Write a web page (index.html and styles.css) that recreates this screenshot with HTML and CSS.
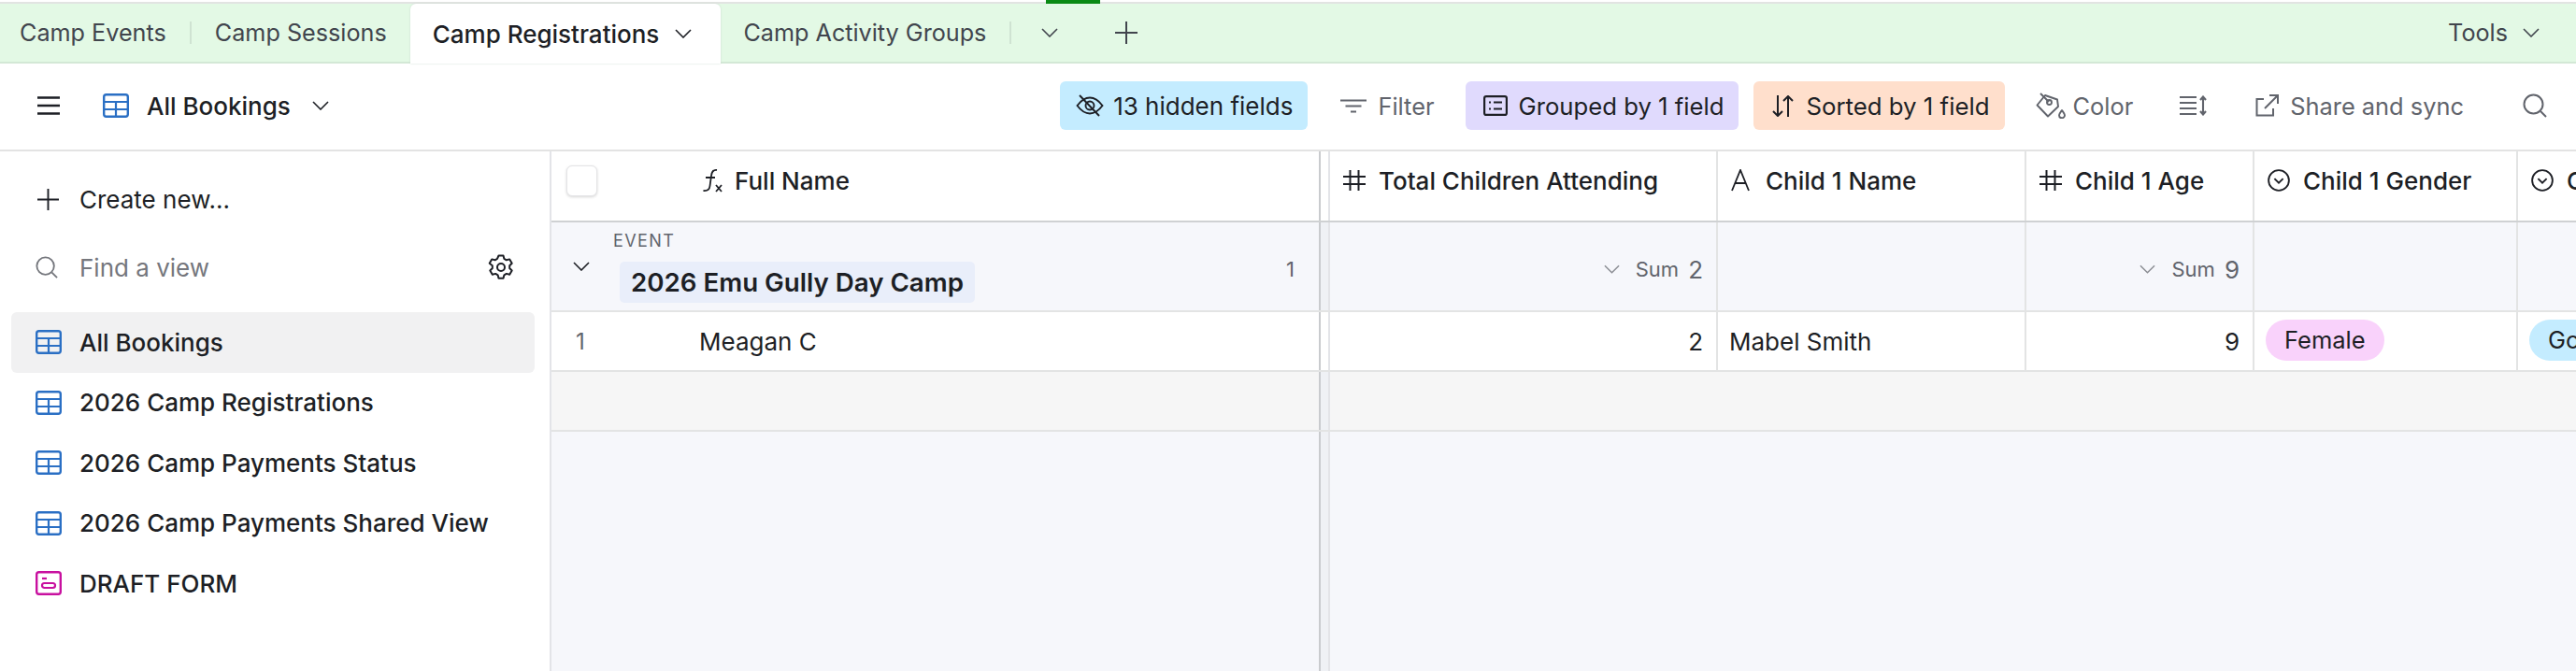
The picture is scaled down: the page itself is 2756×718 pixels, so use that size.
FILE: index.html
```html
<!DOCTYPE html>
<html lang="en">
<head>
    <meta charset="UTF-8">
    <title>Camp Registrations</title>
    <link rel="stylesheet" href="styles.css">
</head>
<body>

<svg class="defs">
    <symbol id="chev" viewBox="0 0 18 10"><path d="M1 1l8 8 8-8" fill="none" stroke="currentColor" stroke-width="1.6"/></symbol>
    <symbol id="table" viewBox="0 0 28 26"><rect x="1.2" y="1.2" width="25.6" height="23.6" rx="2.5" fill="none" stroke="currentColor" stroke-width="2.4"/><path d="M1 9h26M1 17h26M14 9v16" fill="none" stroke="currentColor" stroke-width="2.2"/></symbol>
    <symbol id="hash" viewBox="0 0 24 24"><path d="M7.5 1v22M16.5 1v22M0 8h24M0 16h24" fill="none" stroke="currentColor" stroke-width="2"/></symbol>
    <symbol id="circ" viewBox="0 0 26 26"><circle cx="13" cy="13" r="11.8" fill="none" stroke="currentColor" stroke-width="2"/><path d="M8 11l5 5 5-5" fill="none" stroke="currentColor" stroke-width="2"/></symbol>
    <symbol id="mag" viewBox="0 0 26 26"><circle cx="11.5" cy="11.5" r="10" fill="none" stroke="currentColor" stroke-width="2"/><path d="M19 19l6 6" fill="none" stroke="currentColor" stroke-width="2"/></symbol>
    <symbol id="plus" viewBox="0 0 24 24"><path d="M12 0v24M0 12h24" fill="none" stroke="currentColor" stroke-width="2"/></symbol>
</svg>

<div class="topline"><div class="accent"></div></div>

<div class="tabbar">
    <div class="tab">Camp Events</div>
    <div class="tabsep"></div>
    <div class="tab tab-2">Camp Sessions</div>
    <div class="tab-active">Camp Registrations <svg class="chev"><use href="#chev"/></svg></div>
    <div class="tab tab-4">Camp Activity Groups</div>
    <div class="tabsep"></div>
    <svg class="chev tab-more"><use href="#chev"/></svg>
    <svg class="tab-plus"><use href="#plus"/></svg>
    <div class="spacer"></div>
    <div class="tools">Tools <svg class="chev"><use href="#chev"/></svg></div>
</div>

<div class="toolbar">
    <svg class="burger" viewBox="0 0 24 20"><path d="M0 1.5h24M0 10h24M0 18.5h24" fill="none" stroke="currentColor" stroke-width="2.4"/></svg>
    <svg class="viewicon"><use href="#table"/></svg>
    <div class="viewname">All Bookings</div>
    <svg class="chev"><use href="#chev"/></svg>
    <div class="spacer"></div>

    <div class="pill pill-blue">
        <svg class="ticon" viewBox="0 0 30 24"><g fill="none" stroke="currentColor" stroke-width="1.900"><path d="M1.500 12C6 6 10 3.500 15 3.500S24 6 28.500 12C24 18 20 20.500 15 20.500S6 18 1.500 12z"/><circle cx="15" cy="12" r="4.500"/><path d="M4 1l21 22"/></g></svg>
        13 hidden fields
    </div>
    <div class="tool tool-filter">
        <svg class="ticon-filter" viewBox="0 0 28 15"><path d="M0 1.500h28M5.500 7.500h17M11 13.500h6" fill="none" stroke="currentColor" stroke-width="2.200"/></svg>
        Filter
    </div>
    <div class="pill pill-purple">
        <svg class="ticon-group" viewBox="0 0 26 22"><g fill="none" stroke="currentColor" stroke-width="2.200"><rect x="1.100" y="1.100" width="23.800" height="19.800" rx="2"/><path d="M11 7.500h9M11 14.500h9M6 7.500h2M6 14.500h2"/></g></svg>
        Grouped by 1 field
    </div>
    <div class="pill pill-peach">
        <svg class="ticon-sort" viewBox="0 0 23 23"><path d="M6 0v22M1 17l5 5 5-5M17 23V1M12 6l5-5 5 5" fill="none" stroke="currentColor" stroke-width="2"/></svg>
        Sorted by 1 field
    </div>
    <div class="tool tool-color">
        <svg class="ticon-color" viewBox="0 0 32 28"><g fill="none" stroke="currentColor" stroke-width="1.900" stroke-linejoin="round"><path d="M10 3L1.500 13.500 13 25.500l11-10.500-1-7.500z"/><circle cx="14.500" cy="10.500" r="2.500"/><path d="M5 1l9 9"/><path d="M28 19c1.800 2.500 3 3.700 3 5.300a3 3 0 0 1-6 0c0-1.600 1.200-2.800 3-5.300z"/></g></svg>
        Color
    </div>
    <svg class="ticon-rows" viewBox="0 0 29 22"><path d="M0 2h18M0 8h18M0 14h18M0 20h18M25 2v18M22 5l3-3.500L28 5M22 17l3 3.500 3-3.500" fill="none" stroke="currentColor" stroke-width="2.100"/></svg>
    <div class="tool tool-share">
        <svg class="ticon-share" viewBox="0 0 25 24"><path d="M9 5H1.500v17.500H19V15M10 15L23.500 1.500M15 1h9v9" fill="none" stroke="currentColor" stroke-width="2"/></svg>
        Share and sync
    </div>
    <svg class="tool-search"><use href="#mag"/></svg>
</div>

<div class="main">
    <div class="sidebar">
        <div class="side-create">
            <svg class="side-plus"><use href="#plus"/></svg>
            Create new...
        </div>
        <div class="side-find">
            <svg class="side-mag"><use href="#mag"/></svg>
            <span class="find-text">Find a view</span>
            <svg class="gear" viewBox="0 0 28 28"><g fill="none" stroke="currentColor" stroke-width="2"><circle cx="14" cy="14" r="4"/><path d="M11.500 1.500h5l.9 3.400 2.400 1.400 3.400-.9 2.500 4.300-2.500 2.500v2.800l2.500 2.500-2.500 4.300-3.400-.9-2.400 1.400-.9 3.400h-5l-.9-3.400-2.400-1.400-3.400.9-2.500-4.300 2.500-2.500v-2.800L1.700 9.700l2.500-4.300 3.400.9L10 4.900z" stroke-linejoin="round"/></g></svg>
        </div>
        <div class="view view-on"><svg class="vicon"><use href="#table"/></svg>All Bookings</div>
        <div class="view"><svg class="vicon"><use href="#table"/></svg>2026 Camp Registrations</div>
        <div class="view"><svg class="vicon"><use href="#table"/></svg>2026 Camp Payments Status</div>
        <div class="view"><svg class="vicon"><use href="#table"/></svg>2026 Camp Payments Shared View</div>
        <div class="view"><svg class="vicon vicon-form" viewBox="0 0 28 26"><rect x="1.200" y="1.200" width="25.600" height="23.600" rx="2.500" fill="none" stroke="currentColor" stroke-width="2.400"/><path d="M7 8h5" stroke="currentColor" stroke-width="2.200"/><rect x="7" y="13" width="14" height="5" rx="2.500" fill="none" stroke="currentColor" stroke-width="2.200"/></svg>DRAFT FORM</div>
    </div>

    <div class="grid">
        <div class="row row-head">
            <div class="left">
                <div class="checkbox"></div>
                <svg class="fx" viewBox="0 0 24 26"><path d="M17 2c-4-.5-5.500 2-6 6l-1.500 11c-.5 4-2.500 5.500-7 5M5 10h10" fill="none" stroke="currentColor" stroke-width="1.800"/><path d="M16 18l6 7M22 18l-6 7" fill="none" stroke="currentColor" stroke-width="1.800"/></svg>
                <span class="headtext">Full Name</span>
            </div>
            <div class="gutter"></div>
            <div class="col col-total"><svg class="ficon"><use href="#hash"/></svg><span class="headtext">Total Children Attending</span></div>
            <div class="col col-name"><svg class="ficon ficon-a" viewBox="0 0 20 24"><path d="M1 23L10 1l9 22M4.500 15h11" fill="none" stroke="currentColor" stroke-width="1.800"/></svg><span class="headtext">Child 1 Name</span></div>
            <div class="col col-age"><svg class="ficon"><use href="#hash"/></svg><span class="headtext">Child 1 Age</span></div>
            <div class="col col-gender"><svg class="ficon"><use href="#circ"/></svg><span class="headtext">Child 1 Gender</span></div>
            <div class="col col-last"><svg class="ficon"><use href="#circ"/></svg><span class="headtext">Child 1 T-Shirt</span></div>
        </div>

        <div class="row row-group">
            <div class="left">
                <svg class="chev group-chev"><use href="#chev"/></svg>
                <div class="group-info">
                    <div class="group-label">EVENT</div>
                    <div class="group-name">2026 Emu Gully Day Camp</div>
                </div>
                <div class="group-count">1</div>
            </div>
            <div class="gutter"></div>
            <div class="col col-total sum"><svg class="chev"><use href="#chev"/></svg><span class="sum-label">Sum</span><span class="sum-val">2</span></div>
            <div class="col col-name"></div>
            <div class="col col-age sum"><svg class="chev"><use href="#chev"/></svg><span class="sum-label">Sum</span><span class="sum-val">9</span></div>
            <div class="col col-gender"></div>
            <div class="col col-last"></div>
        </div>

        <div class="row row-data">
            <div class="left">
                <div class="rownum">1</div>
                <div class="rowname">Meagan C</div>
            </div>
            <div class="gutter"></div>
            <div class="col col-total num">2</div>
            <div class="col col-name">Mabel Smith</div>
            <div class="col col-age num">9</div>
            <div class="col col-gender"><span class="tag tag-pink">Female</span></div>
            <div class="col col-last"><span class="tag tag-blue">Gold</span></div>
        </div>

        <div class="row row-blank">
            <div class="left"></div>
            <div class="gutter"></div>
        </div>

        <div class="row row-fill">
            <div class="left"></div>
            <div class="gutter"></div>
        </div>
    </div>
</div>

</body>
</html>
```

FILE: styles.css
```css
* {
    box-sizing: border-box;
}

html, body {
    margin: 0;
    height: 100%;
}

body {
    display: flex;
    flex-direction: column;
    overflow: hidden;
    background-color: white;
    color: #1d1f25;
    font-family: Inter, "Noto Sans", sans-serif;
    font-size: 26px;
}

svg {
    flex: none;
}

.defs {
    display: none;
}

.spacer {
    flex: 1;
}

.chev {
    width: 18px;
    height: 10px;
}

/* top strip */
.topline {
    height: 4px;
    padding-left: 1119px;
    background-color: white;
    border-bottom: 2px solid #e2e4e2;
}

.accent {
    width: 58px;
    height: 4px;
    background-color: #0a8a14;
}

/* tabs */
.tabbar {
    display: flex;
    align-items: center;
    height: 64px;
    padding-left: 21px;
    padding-right: 39px;
    background-color: #e3f9e5;
    border-bottom: 2px solid #d3e8d6;
    color: #41454d;
    font-size: 25.2px;
}

.tabsep {
    width: 2px;
    height: 24px;
    margin-left: 25px;
    background-color: #cfe3d2;
}

.tab-2 {
    margin-left: 25px;
}

.tab-active {
    display: flex;
    align-items: center;
    gap: 17px;
    align-self: stretch;
    height: 64px;
    margin-left: 25px;
    padding: 0 31px 0 24px;
    background-color: white;
    border-radius: 6px 6px 0 0;
    color: #1d1f25;
    font-size: 26px;
    font-weight: 500;
    box-shadow: 0 0 2px #c6d6c9;
}

.tab-4 {
    margin-left: 24px;
}

.tab-more {
    margin-left: 32px;
    color: #41454d;
}

.tab-plus {
    width: 24px;
    height: 24px;
    margin-left: 61px;
}

.tools {
    display: flex;
    align-items: center;
    gap: 16px;
}

/* toolbar */
.toolbar {
    display: flex;
    align-items: center;
    height: 94px;
    padding-left: 40px;
    padding-right: 31px;
    padding-bottom: 2px;
    border-bottom: 2px solid #e3e3e3;
    font-size: 26px;
}

.burger {
    width: 24px;
    height: 20px;
}

.viewicon {
    width: 28px;
    height: 26px;
    margin-left: 46px;
    color: #2a6fc4;
}

.viewname {
    margin-left: 19px;
    margin-right: 23px;
    font-weight: 500;
}

.pill {
    display: flex;
    align-items: center;
    height: 52px;
    padding: 0 16px 0 19px;
    border-radius: 6px;
}

.pill-blue {
    gap: 10px;
    padding-left: 17px;
    background-color: #c4ecff;
}

.pill-purple {
    gap: 12px;
    margin-left: 33px;
    background-color: #e0dafd;
    font-size: 25.7px;
}

.pill-peach {
    gap: 13px;
    margin-left: 16px;
    padding-left: 20px;
    background-color: #ffdfcc;
    font-size: 25.8px;
}

.tool {
    display: flex;
    align-items: center;
    color: #61646c;
    font-size: 25.4px;
}

.ticon {
    width: 30px;
    height: 24px;
}

.tool-filter {
    gap: 12px;
    margin-left: 35px;
}

.ticon-filter {
    width: 28px;
    height: 15px;
}

.ticon-group {
    width: 26px;
    height: 22px;
}

.ticon-sort {
    width: 23px;
    height: 23px;
}

.tool-color {
    gap: 8px;
    margin-left: 33px;
}

.ticon-color {
    width: 32px;
    height: 28px;
}

.ticon-rows {
    width: 29px;
    height: 22px;
    margin-left: 50px;
    color: #61646c;
}

.tool-share {
    gap: 12px;
    margin-left: 52px;
}

.ticon-share {
    width: 25px;
    height: 24px;
}

.tool-search {
    width: 26px;
    height: 26px;
    margin-left: 63px;
    color: #61646c;
}

/* sidebar */
.main {
    display: flex;
    flex: 1;
    min-height: 0;
}

.sidebar {
    flex: none;
    width: 590px;
    padding: 0 16px 0 12px;
    border-right: 2px solid #e3e4e8;
}

.side-create {
    display: flex;
    align-items: center;
    gap: 22px;
    height: 102px;
    padding-left: 28px;
}

.side-plus {
    width: 23px;
    height: 23px;
}

.side-find {
    display: flex;
    align-items: center;
    height: 44px;
    margin-bottom: 26px;
    padding-left: 26px;
    padding-right: 22px;
    color: #75777d;
}

.side-mag {
    width: 24px;
    height: 24px;
}

.find-text {
    flex: 1;
    margin-left: 23px;
}

.gear {
    width: 28px;
    height: 28px;
    color: #1d1f25;
}

.view {
    display: flex;
    align-items: center;
    gap: 19px;
    height: 64.5px;
    padding-left: 26px;
    font-weight: 500;
}

.view-on {
    background-color: #f1f1f2;
    border-radius: 6px;
}

.vicon {
    width: 28px;
    height: 26px;
    color: #2a6fc4;
}

.vicon-form {
    color: #c8109f;
}

/* grid */
.grid {
    display: flex;
    flex: 1;
    flex-direction: column;
    min-width: 0;
    background-color: #f6f7fb;
}

.row {
    display: flex;
    flex: none;
    align-items: stretch;
    border-bottom: 2px solid #e3e4e4;
}

.left {
    display: flex;
    flex: none;
    align-items: center;
    width: 823px;
    border-right: 2px solid #c9cbce;
}

.gutter {
    flex: none;
    width: 10px;
    border-right: 2px solid #e3e4e8;
    background-color: #eff1f5;
}

.col {
    display: flex;
    flex: none;
    align-items: center;
    padding: 0 14px;
    border-right: 2px solid #e3e4e4;
}

.col-total {
    width: 415px;
}

.col-name {
    width: 330px;
}

.col-age {
    width: 244px;
}

.col-gender {
    width: 282px;
}

.col-last {
    width: 282px;
}

.row-head {
    height: 76px;
    background-color: white;
    border-bottom-color: #cfd1d3;
    font-weight: 500;
}

.row-head .gutter {
    background-color: white;
}

.row-head .left,
.row-head .col {
    padding-bottom: 12px;
}

.checkbox {
    width: 33px;
    height: 33px;
    margin-left: 16px;
    background-color: white;
    border: 1px solid #e4e4e6;
    border-radius: 6px;
    box-shadow: 0 1px 3px rgba(0, 0, 0, 0.16);
}

.fx {
    width: 24px;
    height: 26px;
    margin-left: 111px;
}

.fx + .headtext {
    margin-left: 12px;
}

.ficon {
    width: 24px;
    height: 24px;
    margin-right: 14px;
}

.ficon-a {
    width: 20px;
    margin-right: 17px;
}

.row-group {
    height: 96px;
}

.group-chev {
    margin-left: 23px;
}

.group-info {
    flex: 1;
    margin-left: 25px;
}

.group-label {
    margin-bottom: 12px;
    color: #61646c;
    font-size: 18px;
    letter-spacing: 1.4px;
}

.group-name {
    display: inline-block;
    height: 44px;
    margin-left: 7px;
    padding: 0 12px;
    background-color: #e9eefa;
    border-radius: 5px;
    font-size: 27.700px;
    font-weight: 600;
    line-height: 44px;
}

.group-count {
    margin-right: 26px;
    margin-top: 6px;
    color: #61646c;
    font-size: 22px;
}

.sum {
    justify-content: flex-end;
    gap: 10px;
    padding-top: 6px;
    color: #61646c;
}

.sum .chev {
    width: 17px;
    margin-right: 7px;
    color: #8b8e94;
}

.sum-label {
    font-size: 22px;
}

.row-data {
    height: 64px;
    background-color: white;
}

.row-data .gutter {
    background-color: white;
}

.row-data .col {
    padding-left: 12px;
}

.rownum {
    width: 62px;
    text-align: center;
    color: #61646c;
    font-size: 24px;
}

.rowname {
    margin-left: 96px;
}

.num {
    justify-content: flex-end;
}

.tag {
    height: 44px;
    margin-bottom: 2px;
    padding: 0 20px;
    border-radius: 22px;
    font-size: 25.500px;
    line-height: 44px;
}

.tag-pink {
    background-color: #f9d2fb;
}

.tag-blue {
    background-color: #c4ecff;
}

.row-blank {
    height: 64px;
    background-color: #f6f6f6;
}

.row-fill {
    flex: 1;
    border-bottom: 0;
}
```
